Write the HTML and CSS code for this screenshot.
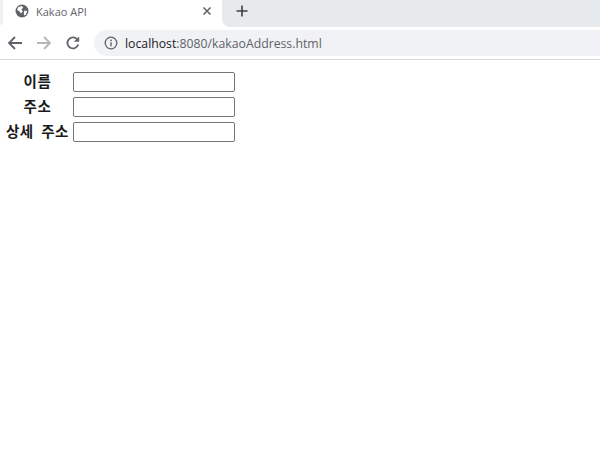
FILE: index.html
```html
<!DOCTYPE html>
<html lang="ko">
<head>
<meta charset="utf-8">
<title>Kakao API</title>
<link rel="stylesheet" href="styles.css">
</head>
<body>
<div class="chrome">
  <div class="tabstrip">
    <div class="tab-edge"></div>
    <div class="tab">
      <svg class="globe" width="14" height="14" viewBox="0 0 14 14"><circle cx="7" cy="7" r="6.5" fill="#5f6368"/><path d="M3 3.2 L6.6 2 L8.2 3.6 L6.4 5.6 L7.8 7.4 L5.8 9.6 L4.6 7.4 L2.2 6 Z M9.4 6.6 L12.2 7 L11 10.4 L9 11.6 L8.8 9 Z" fill="#fff"/></svg>
      <span class="tab-title">Kakao API</span>
      <svg class="tab-close" width="10" height="10" viewBox="0 0 10 10"><path d="M1.5 1.5 L8.5 8.5 M8.5 1.5 L1.5 8.5" stroke="#5f6368" stroke-width="1.6"/></svg>
    </div>
    <div class="tab-rest">
      <svg class="new-tab" width="12" height="12" viewBox="0 0 12 12"><path d="M6 0.5 V11.5 M0.5 6 H11.5" stroke="#3c4043" stroke-width="1.6"/></svg>
    </div>
  </div>
  <div class="toolbar">
    <svg class="nav" width="16" height="16" viewBox="0 0 16 16"><path d="M15 8 H2 M8 2 L2 8 L8 14" fill="none" stroke="#5f6368" stroke-width="1.8"/></svg>
    <svg class="nav" width="16" height="16" viewBox="0 0 16 16"><path d="M1 8 H14 M8 2 L14 8 L8 14" fill="none" stroke="#b4b7bb" stroke-width="1.8"/></svg>
    <svg class="nav" width="16" height="16" viewBox="0 0 16 16"><path d="M13.2 9.6 A5.5 5.5 0 1 1 12 4.2" fill="none" stroke="#5f6368" stroke-width="1.8"/><path d="M14.2 1.4 V6.8 H8.8 Z" fill="#5f6368"/></svg>
    <div class="omnibox">
      <svg class="info" width="14" height="14" viewBox="0 0 14 14"><circle cx="7" cy="7" r="5.8" fill="none" stroke="#5f6368" stroke-width="1.3"/><path d="M7 6.2 V10.2" stroke="#5f6368" stroke-width="1.4"/><circle cx="7" cy="4.3" r="0.9" fill="#5f6368"/></svg>
      <span class="url"><span class="host">localhost</span>:8080/kakaoAddress.html</span>
    </div>
  </div>
</div>
<table class="form">
  <tr><th>이름</th><td><input class="field" type="text"></td></tr>
  <tr><th>주소</th><td><input class="field" type="text"></td></tr>
  <tr><th>상세 주소</th><td><input class="field" type="text"></td></tr>
</table>
</body>
</html>
```

FILE: styles.css
```css
html, body { margin: 0; padding: 0; background: #fff; }
body { width: 600px; height: 454px; overflow: hidden; }
.chrome { height: 60px; border-bottom: 1px solid #d9dadc; box-sizing: border-box; }
.tabstrip { height: 27px; background: #fff; display: flex; }
.tab-edge { width: 3px; height: 25px; background: #eef0f2; border-bottom-right-radius: 4px; }
.tab { width: 219px; height: 27px; background: #fff; display: flex; align-items: center; box-sizing: border-box; padding: 0 0 5px 12px; }
.tab-rest { flex: 1; background: #e7eaed; border-bottom-left-radius: 8px; display: flex; align-items: center; padding-bottom: 5px; }
.globe { flex: none; }
.tab-title { font: 11px "Open Sans", "Liberation Sans", sans-serif; color: #5f6368; margin-left: 7px; flex: 1; }
.tab-close { margin-right: 10px; flex: none; }
.new-tab { margin-left: 14px; }
.toolbar { height: 32px; background: #fff; display: flex; align-items: center; padding-left: 7px; box-sizing: border-box; }
.nav { margin-right: 13px; flex: none; }
.omnibox { flex: 1; height: 26px; background: #f0f2f5; border-radius: 13px 0 0 13px; display: flex; align-items: center; padding-left: 10px; }
.info { flex: none; }
.url { font: 12.25px "Open Sans", "Liberation Sans", sans-serif; color: #5f6368; margin-left: 7px; }
.host { color: #202124; }
.form { border-collapse: separate; border-spacing: 0 5px; margin: 7px 0 0 4px; font-family: "Noto Sans CJK KR", sans-serif; }
.form th { padding: 0 2px 2px; vertical-align: top; text-align: center; font-weight: bold; color: #1a1a1a; font-size: 14.5px; letter-spacing: 0.5px; word-spacing: 3px; line-height: 18px; }
.form td { padding: 0 0 0 2px; }
.field { display: block; width: 162px; height: 20px; box-sizing: border-box; margin: 0; padding: 1px 2px; border: 1px solid #767676; border-radius: 2px; background: #fff; }
```
